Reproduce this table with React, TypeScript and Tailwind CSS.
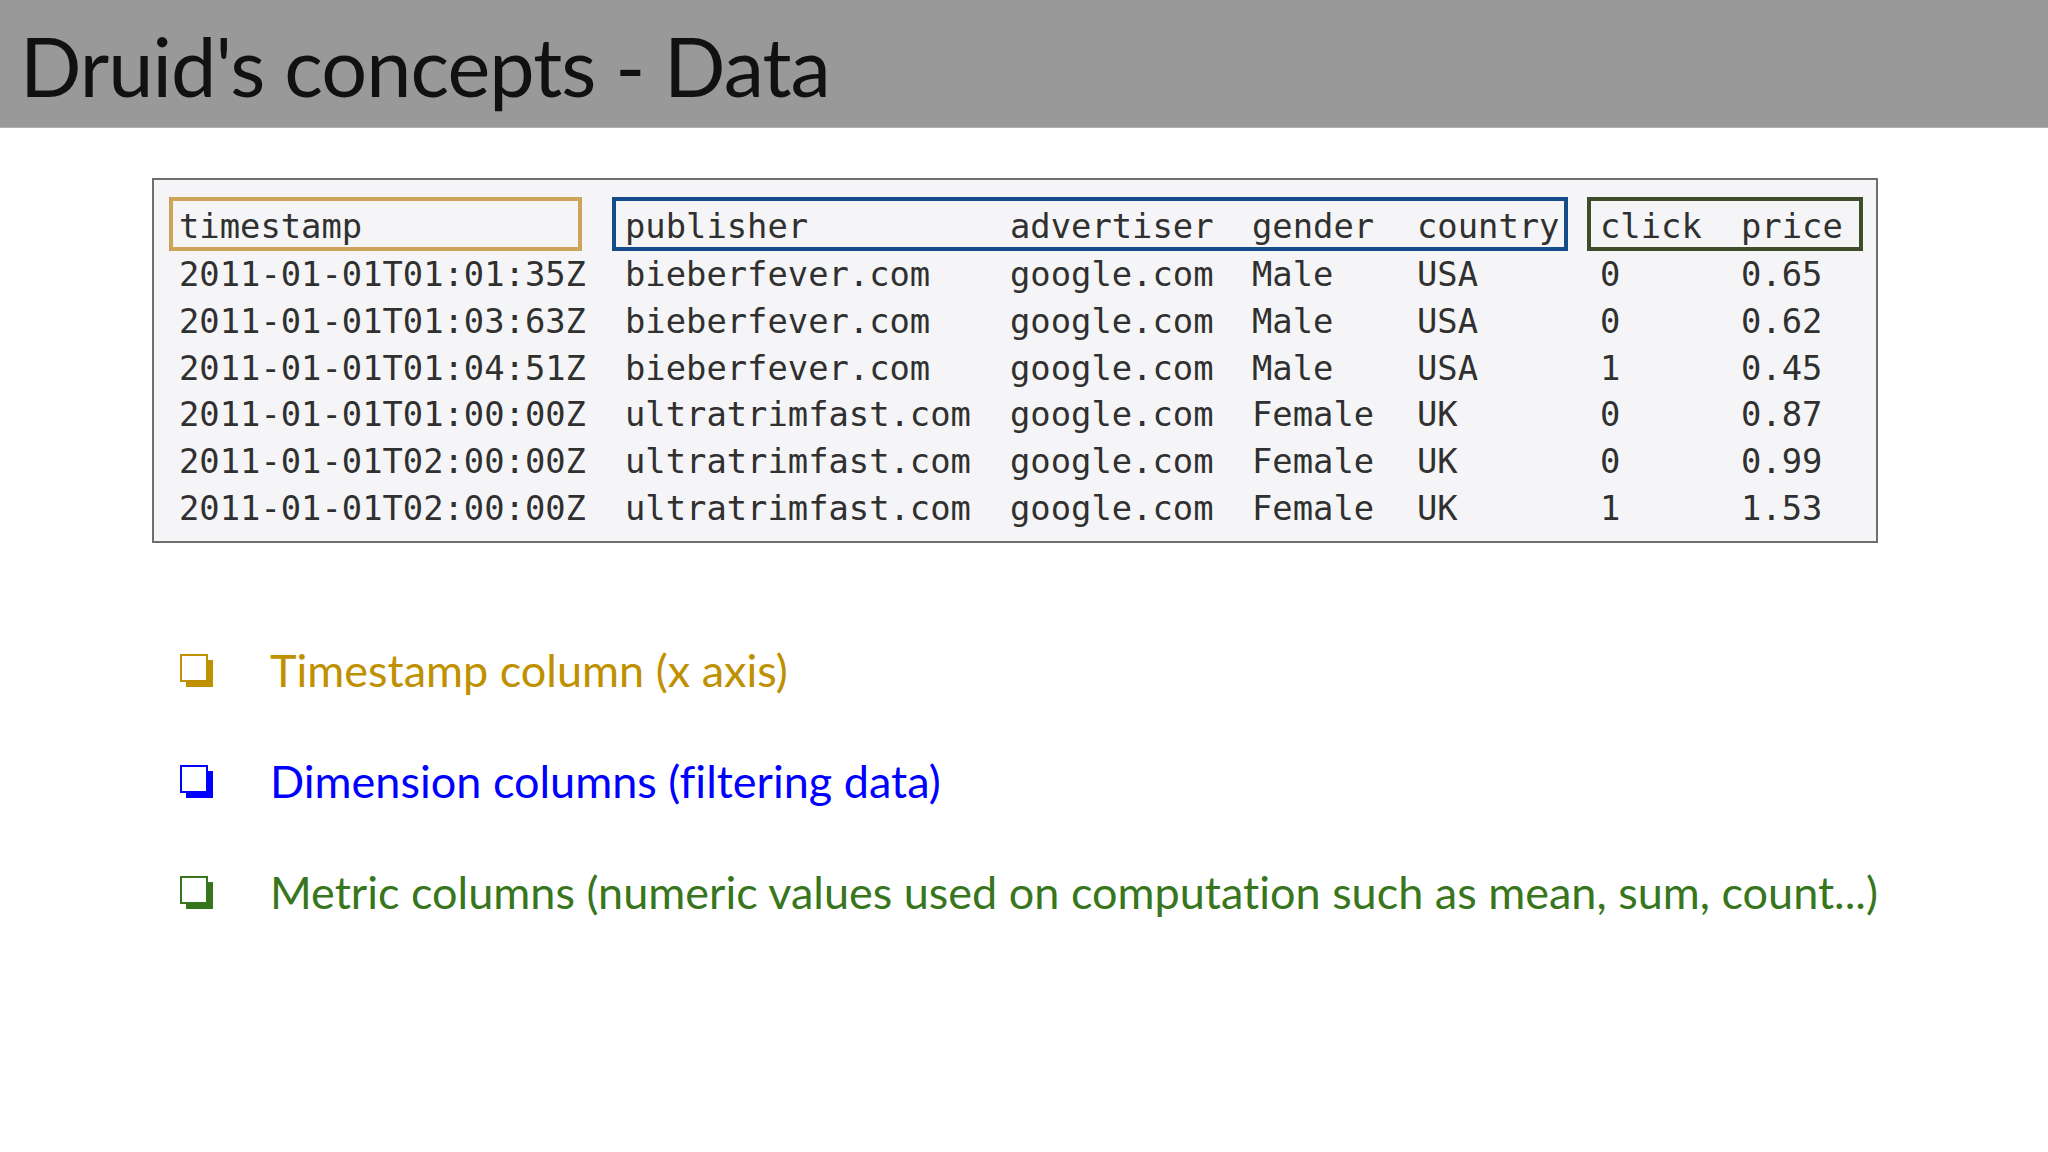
import React from "react";

const rows = [
  ["2011-01-01T01:01:35Z", "bieberfever.com", "google.com", "Male", "USA", "0", "0.65"],
  ["2011-01-01T01:03:63Z", "bieberfever.com", "google.com", "Male", "USA", "0", "0.62"],
  ["2011-01-01T01:04:51Z", "bieberfever.com", "google.com", "Male", "USA", "1", "0.45"],
  ["2011-01-01T01:00:00Z", "ultratrimfast.com", "google.com", "Female", "UK", "0", "0.87"],
  ["2011-01-01T02:00:00Z", "ultratrimfast.com", "google.com", "Female", "UK", "0", "0.99"],
  ["2011-01-01T02:00:00Z", "ultratrimfast.com", "google.com", "Female", "UK", "1", "1.53"],
];

function Bullet({ color }: { color: string }) {
  return (
    <svg width="33" height="33" viewBox="0 0 33 33" className="shrink-0">
      <rect x="6" y="6" width="27" height="27" fill={color} />
      <rect x="1" y="1" width="26" height="26" fill="#ffffff" stroke={color} strokeWidth="2" />
    </svg>
  );
}

export default function App() {
  const mono = { fontFamily: '"DejaVu Sans Mono", "Liberation Mono", monospace' };
  return (
    <div className="w-[2048px] h-[1152px] bg-white overflow-hidden [font-variant-ligatures:none]" style={{ fontFamily: "Lato, sans-serif" }}>
      <div className="h-[128px] bg-[#999999] pl-[20px] pt-[17px] border-b border-[#b0b0b0]">
        <div className="text-[81px] leading-[1.2] text-[#111111] tracking-[-0.95px]">Druid's concepts - Data</div>
      </div>

      <div className="ml-[152px] mt-[50px] w-[1726px] h-[365px] border-2 border-[#6e6e6e] bg-[#f5f5f7] pt-[17px] text-[#303030] text-[33.8px]" style={mono}>
        <div className="flex h-[54px]">
          <div className="ml-[15px] w-[413px] border-4 border-[#cda45a] pl-[6px] pt-[6px] flex items-center">timestamp</div>
          <div className="ml-[30px] w-[956px] border-4 border-[#174c8c] pl-[9px] pt-[6px] flex items-center">
            <span className="w-[385px]">publisher</span>
            <span className="w-[242px]">advertiser</span>
            <span className="w-[165px]">gender</span>
            <span>country</span>
          </div>
          <div className="ml-[19px] w-[276px] border-4 border-[#3e4d2c] pl-[9px] pt-[6px] flex items-center">
            <span className="w-[141px]">click</span>
            <span>price</span>
          </div>
        </div>
        <div className="flex flex-col">
          {rows.map((r, i) => (
            <div key={i} className="flex h-[46.8px] items-center pl-[25px] pt-[2px]">
              <span className="w-[446px]">{r[0]}</span>
              <span className="w-[385px]">{r[1]}</span>
              <span className="w-[242px]">{r[2]}</span>
              <span className="w-[165px]">{r[3]}</span>
              <span className="w-[183px]">{r[4]}</span>
              <span className="w-[141px]">{r[5]}</span>
              <span>{r[6]}</span>
            </div>
          ))}
        </div>
      </div>

      <div className="mt-[100px] flex flex-col gap-[57px] text-[45px] leading-[1.2]">
        <div className="flex items-center pl-[180px] text-[#bf9000]">
          <Bullet color="#bf9000" />
          <span className="ml-[57px]">Timestamp column (x axis)</span>
        </div>
        <div className="flex items-center pl-[180px] text-[#0000ff]">
          <Bullet color="#0000ff" />
          <span className="ml-[57px]">Dimension columns (filtering data)</span>
        </div>
        <div className="flex items-center pl-[180px] text-[#38761d]">
          <Bullet color="#38761d" />
          <span className="ml-[57px]">Metric columns (numeric values used on computation such as mean, sum, count...)</span>
        </div>
      </div>
    </div>
  );
}
